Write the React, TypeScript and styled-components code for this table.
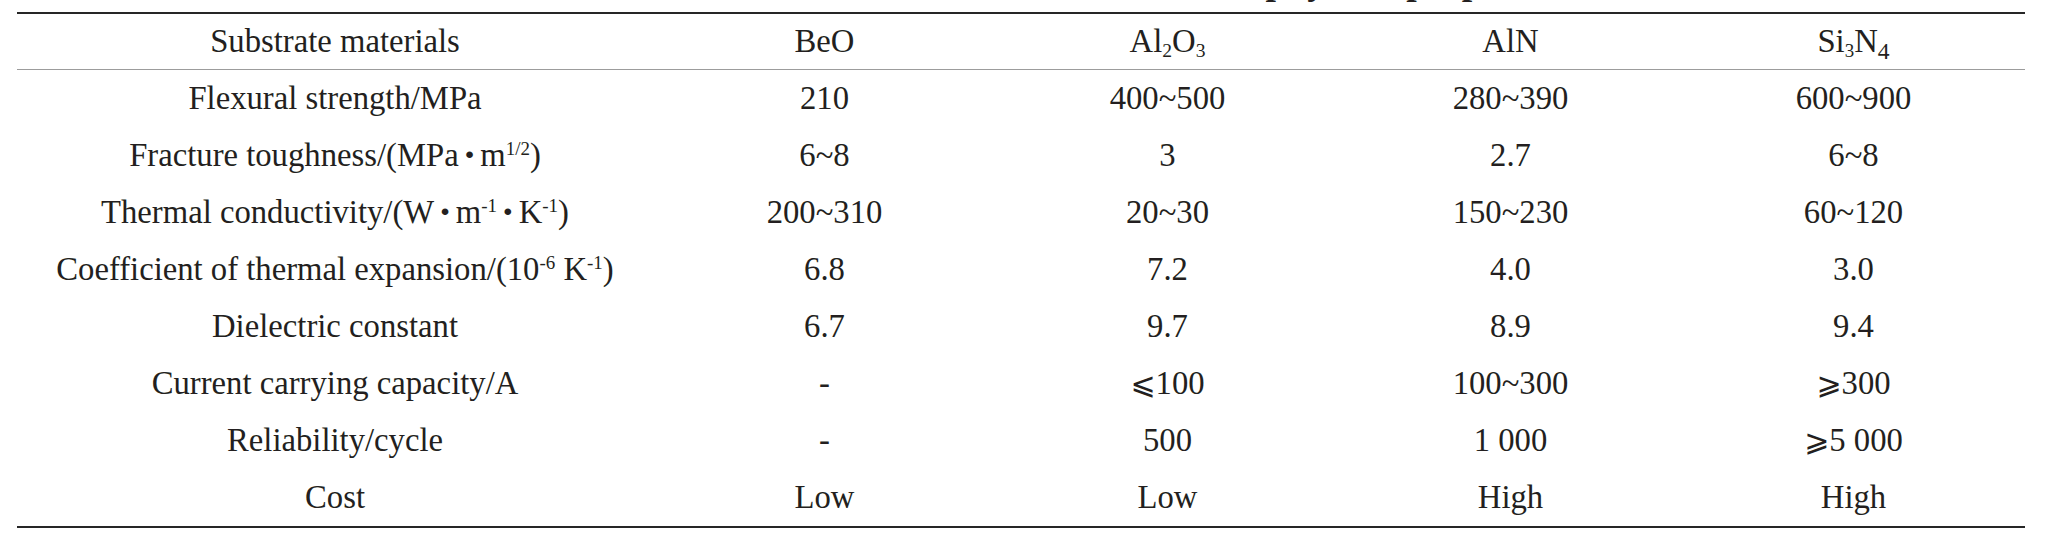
import React from "react";
import styled, { createGlobalStyle } from "styled-components";

const GlobalStyle = createGlobalStyle`
  html, body {
    margin: 0;
    padding: 0;
    background: #ffffff;
  }
  body {
    font-family: "Liberation Serif", "Times New Roman", "DejaVu Serif", "DejaVu Sans", serif;
    color: #231f20;
  }
`;

const Page = styled.div`
  padding: 0 0 0 17px;
  width: 2008px;
`;

const Caption = styled.div`
  height: 40px;
  margin-top: -38px;
  padding-left: 1028px;
  font-size: 37.5px;
  line-height: 40px;
  font-weight: 700;
  white-space: nowrap;
`;

const Table = styled.div`
  margin-top: 10px;
  display: flex;
  flex-direction: column;
  border-top: 2px solid #262626;
  border-bottom: 2.5px solid #262626;
`;

const Row = styled.div<{ $head?: boolean }>`
  display: grid;
  grid-template-columns: 636px repeat(4, 1fr);
  height: ${(p) => (p.$head ? "54.5px" : "57px")};
  line-height: ${(p) => (p.$head ? "54.5px" : "57px")};
  border-bottom: ${(p) => (p.$head ? "1.5px solid #9c9c9c" : "none")};
`;

const Cell = styled.div`
  text-align: center;
  font-size: 32.7px;
  white-space: nowrap;
`;

const Sup = styled.span<{ $size?: number }>`
  font-size: ${(p) => p.$size ?? 0.58}em;
  line-height: 0;
  vertical-align: 0.6em;
`;

const Sub = styled.span<{ $size?: number }>`
  font-size: ${(p) => p.$size ?? 0.6}em;
  line-height: 0;
  vertical-align: -0.28em;
`;

const Dot = styled.span`
  display: inline-block;
  margin: 0 4px;
  font-size: 1.25em;
  font-weight: 700;
  line-height: 0;
  vertical-align: -0.06em;
`;

const Rel = styled.span`
  font-family: "DejaVu Serif", "DejaVu Sans", serif;
  font-size: 0.92em;
`;

type RowData = { label: React.ReactNode; values: React.ReactNode[] };

const header: React.ReactNode[] = [
  "Substrate materials",
  "BeO",
  <>
    Al<Sub>2</Sub>O<Sub>3</Sub>
  </>,
  "AlN",
  <>
    Si<Sub $size={0.58}>3</Sub>N<Sub $size={0.72}>4</Sub>
  </>,
];

const rows: RowData[] = [
  { label: "Flexural strength/MPa", values: ["210", "400~500", "280~390", "600~900"] },
  {
    label: (
      <>
        Fracture toughness/(MPa<Dot>·</Dot>m<Sup>1/2</Sup>)
      </>
    ),
    values: ["6~8", "3", "2.7", "6~8"],
  },
  {
    label: (
      <>
        Thermal conductivity/(W<Dot>·</Dot>m<Sup>-1</Sup>
        <Dot>·</Dot>K<Sup>-1</Sup>)
      </>
    ),
    values: ["200~310", "20~30", "150~230", "60~120"],
  },
  {
    label: (
      <>
        Coefficient of thermal expansion/(10<Sup>-6</Sup> K<Sup>-1</Sup>)
      </>
    ),
    values: ["6.8", "7.2", "4.0", "3.0"],
  },
  { label: "Dielectric constant", values: ["6.7", "9.7", "8.9", "9.4"] },
  {
    label: "Current carrying capacity/A",
    values: [
      "-",
      <>
        <Rel>⩽</Rel>100
      </>,
      "100~300",
      <>
        <Rel>⩾</Rel>300
      </>,
    ],
  },
  {
    label: "Reliability/cycle",
    values: [
      "-",
      "500",
      "1 000",
      <>
        <Rel>⩾</Rel>5 000
      </>,
    ],
  },
  { label: "Cost", values: ["Low", "Low", "High", "High"] },
];

export default function App() {
  return (
    <>
      <GlobalStyle />
      <Page>
        <Caption>Table 1 Main physical properties of ceramic substrates</Caption>
        <Table>
          <Row $head>
            {header.map((h, i) => (
              <Cell key={i}>{h}</Cell>
            ))}
          </Row>
          {rows.map((r, i) => (
            <Row key={i}>
              <Cell>{r.label}</Cell>
              {r.values.map((v, j) => (
                <Cell key={j}>{v}</Cell>
              ))}
            </Row>
          ))}
        </Table>
      </Page>
    </>
  );
}
